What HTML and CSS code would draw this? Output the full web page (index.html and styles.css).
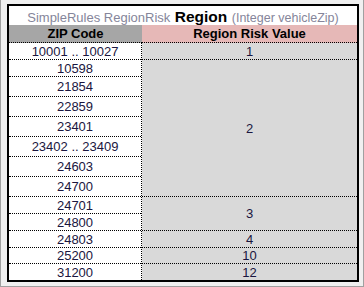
FILE: index.html
```html
<!DOCTYPE html>
<html>
<head>
<meta charset="utf-8">
<link rel="stylesheet" href="styles.css">
</head>
<body>
<div class="frame">
  <div class="sheet">
    <div class="title">
      <span class="t-name">SimpleRules RegionRisk</span>
      <span class="t-main">Region</span>
      <span class="t-sig">(Integer vehicleZip)</span>
    </div>
    <div class="hdr">
      <div class="hd hd-zip">ZIP Code</div>
      <div class="hd hd-val">Region Risk Value</div>
    </div>
    <div class="cols">
      <div class="col col-zip">
        <div class="cell h17">10001 .. 10027</div>
        <div class="cell h17">10598</div>
        <div class="cell h20">21854</div>
        <div class="cell h20">22859</div>
        <div class="cell h20">23401</div>
        <div class="cell h20">23402 .. 23409</div>
        <div class="cell h20">24603</div>
        <div class="cell h20">24700</div>
        <div class="cell h17">24701</div>
        <div class="cell h17">24800</div>
        <div class="cell h17">24803</div>
        <div class="cell h16">25200</div>
        <div class="cell last">31200</div>
      </div>
      <div class="col col-val">
        <div class="cell h17">1</div>
        <div class="cell h137">2</div>
        <div class="cell h34">3</div>
        <div class="cell h17">4</div>
        <div class="cell h16">10</div>
        <div class="cell last">12</div>
      </div>
    </div>
  </div>
</div>
</body>
</html>
```

FILE: styles.css
```css
html, body {
  margin: 0;
  padding: 0;
}
body {
  width: 364px;
  height: 287px;
  background: #f0f0f0;
  font-family: "Liberation Sans", Arial, sans-serif;
  overflow: hidden;
}
.frame {
  box-sizing: border-box;
  width: 364px;
  height: 287px;
  border-left: 1px solid #a0a0a0;
  border-right: 1px solid #a0a0a0;
  border-bottom: 1px solid #a0a0a0;
  padding: 4px 0 0 6px;
}
.sheet {
  box-sizing: border-box;
  width: 352px;
  height: 278px;
  border: 2px solid #000;
  background: #fff;
  display: flex;
  flex-direction: column;
}
.title {
  box-sizing: border-box;
  height: 19px;
  padding-top: 2px;
  line-height: 17px;
  text-align: center;
  white-space: nowrap;
}
.t-name {
  font-size: 13px;
  color: #85859a;
}
.t-main {
  font-size: 15.5px;
  font-weight: bold;
  color: #000;
}
.t-sig {
  font-size: 12.5px;
  color: #85859a;
}
.hdr {
  display: flex;
  height: 18px;
}
.hd {
  box-sizing: border-box;
  height: 18px;
  border-bottom: 1px dotted #000;
  font-size: 13px;
  font-weight: bold;
  color: #000;
  display: flex;
  align-items: center;
  justify-content: center;
}
.hd-zip {
  width: 133px;
  background: #a6a6a6;
}
.hd-val {
  flex: 1;
  background: #e6b8b7;
}
.cols {
  flex: 1;
  display: flex;
}
.col {
  display: flex;
  flex-direction: column;
}
.col-zip {
  box-sizing: border-box;
  width: 133px;
  border-right: 1px dotted #000;
  background: #fff;
}
.col-val {
  flex: 1;
  background: #d9d9d9;
}
.cell {
  box-sizing: border-box;
  border-bottom: 1px dotted #000;
  display: flex;
  align-items: center;
  justify-content: center;
  font-size: 13px;
  color: #1a1640;
}
.cell.last {
  border-bottom: none;
  flex: 1;
}
.h16 { height: 16px; }
.h17 { height: 17px; }
.h20 { height: 20px; }
.h34 { height: 34px; }
.h137 { height: 137px; }
```
